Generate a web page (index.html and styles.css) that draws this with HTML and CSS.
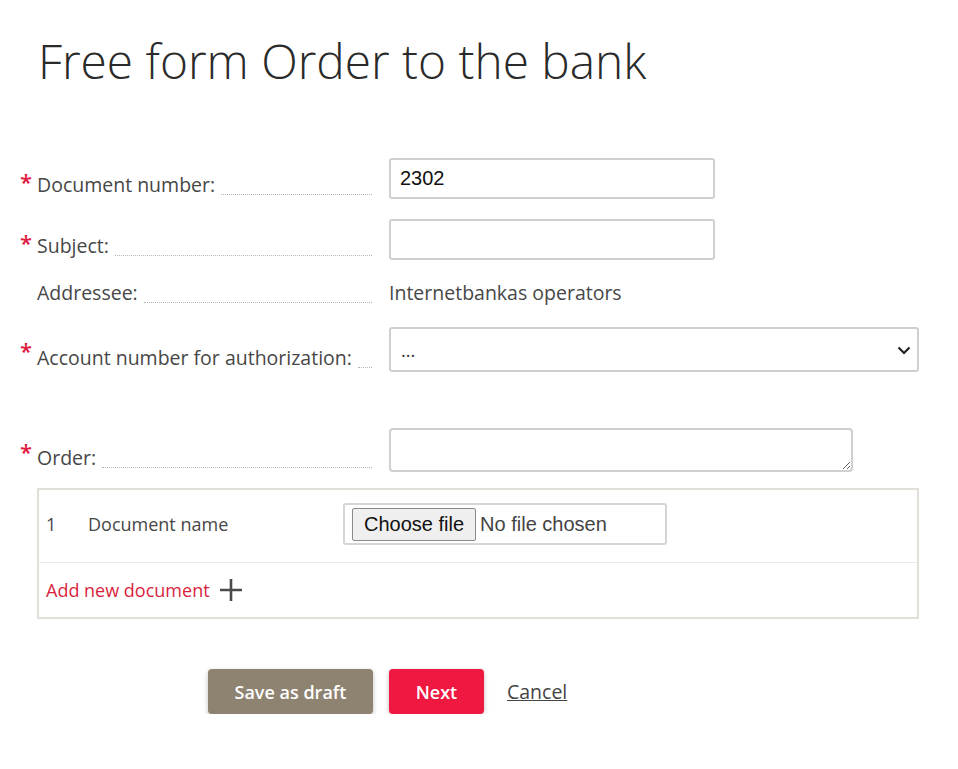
FILE: index.html
```html
<!DOCTYPE html>
<html>
<head>
<meta charset="UTF-8">
<title>Free form Order to the bank</title>
<link rel="stylesheet" href="styles.css">
</head>
<body>

<div class="page">
	<h1 class="title">Free form Order to the bank</h1>

	<form class="order-form">
		<div class="row">
			<span class="req">*</span>
			<label class="label"><span>Document number:</span><i class="dots"></i></label>
			<div class="field"><input type="text" class="txt" value="2302"></div>
		</div>
		<div class="row">
			<span class="req">*</span>
			<label class="label"><span>Subject:</span><i class="dots"></i></label>
			<div class="field"><input type="text" class="txt"></div>
		</div>
		<div class="row">
			<span class="req"></span>
			<label class="label"><span>Addressee:</span><i class="dots"></i></label>
			<div class="field plain">Internetbankas operators</div>
		</div>
		<div class="row">
			<span class="req">*</span>
			<label class="label"><span>Account number for authorization:</span><i class="dots"></i></label>
			<div class="field">
				<div class="select">
					<span>...</span>
					<svg width="16" height="16" viewBox="0 0 16 16"><path d="M2.5 5.5 L8 11 L13.5 5.5" fill="none" stroke="#222" stroke-width="2.2"/></svg>
				</div>
			</div>
		</div>
		<div class="row row-order">
			<span class="req">*</span>
			<label class="label"><span>Order:</span><i class="dots"></i></label>
			<div class="field"><textarea class="area"></textarea></div>
		</div>

		<div class="docs">
			<div class="doc-row">
				<span class="doc-no">1</span>
				<span class="doc-name">Document name</span>
				<label class="file">
					<input type="file" class="file-input">
					<span class="file-btn">Choose file</span>
					<span class="file-text">No file chosen</span>
				</label>
			</div>
			<div class="doc-add">
				<a href="#" class="add-link">Add new document</a>
				<svg width="22" height="22" viewBox="0 0 22 22"><path d="M11 0 V22 M0 11 H22" stroke="#4a4a48" stroke-width="2.6"/></svg>
			</div>
		</div>

		<div class="actions">
			<button type="button" class="btn btn-draft">Save as draft</button>
			<button type="button" class="btn btn-next">Next</button>
			<a href="#" class="cancel">Cancel</a>
		</div>
	</form>
</div>

</body>
</html>
```

FILE: styles.css
```css
body{
	margin: 0;
	background: #fff;
	font-family: "Open Sans", "Liberation Sans", sans-serif;
	color: #474747;
}
.page{ padding: 0 20px; }
.title{
	margin: 28px 0 0 18px;
	font-size: 47.8px;
	font-weight: 300;
	line-height: 66px;
	color: #2a2a2a;
}
.order-form{
	margin-top: 64px;
	display: flex;
	flex-direction: column;
	gap: 20px;
}
.row{
	display: grid;
	grid-template-columns: 17px 335px 1fr;
	align-items: end;
}
.field{ margin-left: 17px; }
.row-order{ margin-top: 36px; }
.req{
	color: #e0193f;
	font-size: 22px;
	align-self: start;
	line-height: 1;
	margin-top: 12px;
	font-weight: 600;
}
.label{
	display: flex;
	align-items: flex-end;
	font-size: 19.5px;
	line-height: 26px;
	padding-bottom: 1px;
	white-space: nowrap;
}
.label span{ margin-right: 6px; }
.dots{
	flex: 1;
	border-bottom: 1px dotted #b5b5b5;
	margin-bottom: 3px;
}
.txt{
	width: 326px;
	height: 41px;
	box-sizing: border-box;
	border: 2px solid #cfcfcf;
	border-radius: 3px;
	padding: 0 9px;
	font: 20px "Liberation Sans", Arial, sans-serif;
	color: #111;
	display: block;
}
.plain{
	font-size: 19.5px;
	line-height: 26px;
	padding-bottom: 1px;
}
.select{
	width: 530px;
	height: 45px;
	box-sizing: border-box;
	border: 2px solid #cfcfcf;
	border-radius: 3px;
	display: flex;
	align-items: center;
	justify-content: space-between;
	padding: 0 5px 0 10px;
	font-size: 18px;
	color: #333;
}
.area{
	display: block;
	width: 464px;
	height: 44px;
	box-sizing: border-box;
	border: 2px solid #cfcfcf;
	border-radius: 4px;
	resize: vertical;
	font-family: inherit;
}
.docs{
	margin: -4px 0 0 17px;
	width: 882px;
	box-sizing: border-box;
	border: 2px solid #e2dfd8;
}
.doc-row{
	display: flex;
	align-items: center;
	height: 73px;
	box-sizing: border-box;
	padding: 0 0 4px 7px;
	border-bottom: 1px solid #eeebe6;
	font-size: 18px;
}
.doc-no{ width: 42px; }
.doc-name{ width: 255px; }
.file{
	display: flex;
	align-items: center;
	width: 324px;
	height: 42px;
	box-sizing: border-box;
	border: 2px solid #d5d5d5;
	border-radius: 3px;
	padding: 0 7px;
	font: 20px "Liberation Sans", Arial, sans-serif;
	color: #444;
}
.file-input{ display: none; }
.file-btn{
	box-sizing: border-box;
	height: 33px;
	line-height: 31px;
	padding: 0 11px;
	margin-right: 4px;
	background: #efefef;
	border: 1px solid #8a8a8a;
	border-radius: 2px;
	color: #111;
}
.doc-add{
	display: flex;
	align-items: center;
	gap: 10px;
	height: 54px;
	padding-left: 7px;
}
.add-link{
	color: #d91f3e;
	text-decoration: none;
	font-size: 18px;
}
.actions{
	margin: 30px 0 0 188px;
	display: flex;
	align-items: center;
	gap: 16px;
}
.btn{
	height: 45px;
	border: none;
	border-radius: 4px;
	color: #fff;
	font: 600 18px "Open Sans", sans-serif;
	box-shadow: 0 2px 5px rgba(0,0,0,0.25);
}
.btn-draft{
	width: 165px;
	background: #8e8271;
}
.btn-next{
	width: 95px;
	background: #ef1840;
}
.cancel{
	margin-left: 7px;
	color: #444;
	font-size: 19.5px;
	text-decoration: underline;
}
```
